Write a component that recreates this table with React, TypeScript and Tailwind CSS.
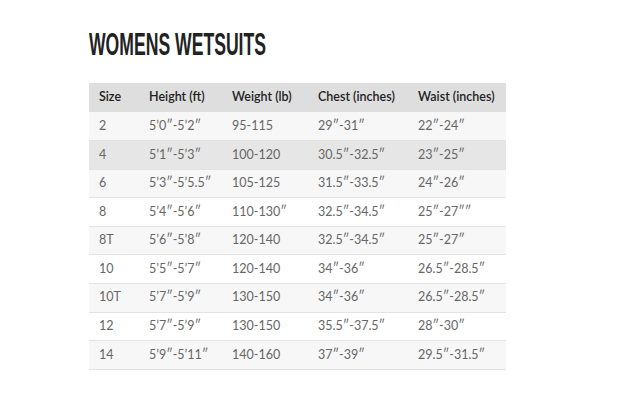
const rows = [
  ["2", "5\u20190\u2033-5\u20192\u2033", "95-115", "29\u2033-31\u2033", "22\u2033-24\u2033"],
  ["4", "5\u20191\u2033-5\u20193\u2033", "100-120", "30.5\u2033-32.5\u2033", "23\u2033-25\u2033"],
  ["6", "5\u20193\u2033-5\u20195.5\u2033", "105-125", "31.5\u2033-33.5\u2033", "24\u2033-26\u2033"],
  ["8", "5\u20194\u2033-5\u20196\u2033", "110-130\u2033", "32.5\u2033-34.5\u2033", "25\u2033-27\u2033\u2033"],
  ["8T", "5\u20196\u2033-5\u20198\u2033", "120-140", "32.5\u2033-34.5\u2033", "25\u2033-27\u2033"],
  ["10", "5\u20195\u2033-5\u20197\u2033", "120-140", "34\u2033-36\u2033", "26.5\u2033-28.5\u2033"],
  ["10T", "5\u20197\u2033-5\u20199\u2033", "130-150", "34\u2033-36\u2033", "26.5\u2033-28.5\u2033"],
  ["12", "5\u20197\u2033-5\u20199\u2033", "130-150", "35.5\u2033-37.5\u2033", "28\u2033-30\u2033"],
  ["14", "5\u20199\u2033-5\u201911\u2033", "140-160", "37\u2033-39\u2033", "29.5\u2033-31.5\u2033"],
];

const headers = ["Size", "Height (ft)", "Weight (lb)", "Chest (inches)", "Waist (inches)"];
const widths = ["w-[50px]", "w-[83px]", "w-[86px]", "w-[100px]", "w-[98px]"];

export default function App() {
  return (
    <div className="w-[623px] h-[407px] bg-white pl-[89px] pt-[28px] font-['Lato','Noto_Sans',sans-serif]">
      <h1 className="origin-left scale-x-[0.55] whitespace-nowrap text-[32px] leading-[32px] font-bold text-[#222] font-['Liberation_Sans',sans-serif]">
        WOMENS WETSUITS
      </h1>

      <table className="mt-[23px] w-[417px] border-collapse text-[12.5px]">
        <thead>
          <tr className="h-[29px] bg-[#dedede]">
            {headers.map((h, i) => (
              <th key={h} className={`${widths[i]} pl-[10px] text-left font-semibold text-[#222]`}>
                {h}
              </th>
            ))}
          </tr>
        </thead>
        <tbody>
          {rows.map((r, idx) => {
            const bg = idx === 1 ? "bg-[#e6e6e6]" : idx % 2 === 0 ? "bg-[#f7f7f7]" : "bg-white";
            return (
              <tr key={r[0]} className={`h-[28.6px] border-b border-[#e3e3e3] ${bg}`}>
                {r.map((c, i) => (
                  <td key={i} className="pl-[10px] text-[#666]">
                    {c}
                  </td>
                ))}
              </tr>
            );
          })}
        </tbody>
      </table>
    </div>
  );
}
